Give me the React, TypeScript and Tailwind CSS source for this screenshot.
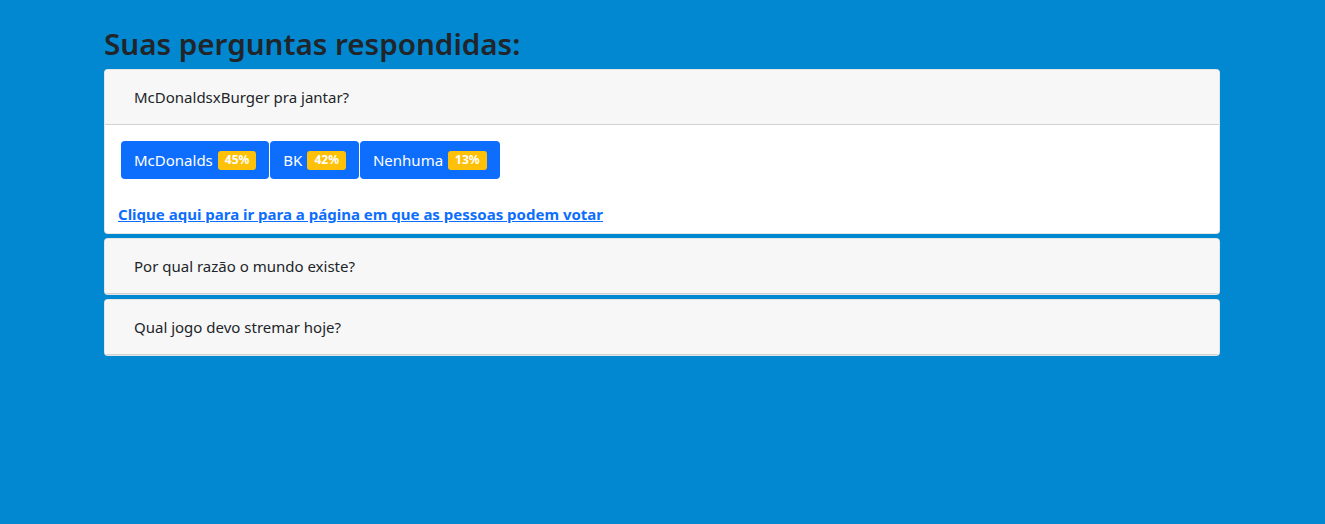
export default function App() {
  const options = [
    { name: "McDonalds", pct: "45%" },
    { name: "BK", pct: "42%" },
    { name: "Nenhuma", pct: "13%" },
  ];

  return (
    <div
      className="min-h-[524px] bg-[#0288d1] text-[#212529]"
      style={{ fontFamily: '"Noto Sans", "Open Sans", sans-serif' }}
    >
      <div className="ml-[92px] w-[1140px] px-3 pt-[22px]">
        <h2 className="mb-[3px] text-[29.6px] font-semibold leading-[44px]">
          Suas perguntas respondidas:
        </h2>

        <div className="flex flex-col gap-[4px]">
          {/* first card, open */}
          <div className="overflow-hidden rounded-[4px] border border-black/10 bg-white">
            <div className="flex h-[55px] items-center border-b border-black/15 bg-[#f7f7f7] px-[29px] text-[15px]">
              McDonaldsxBurger pra jantar?
            </div>
            <div className="px-[16px] pb-[9px] pt-[16px]">
              <div className="flex gap-px">
                {options.map((o) => (
                  <button
                    key={o.name}
                    className="flex h-[38px] items-center gap-[5px] rounded-[4px] bg-[#0d6efd] pl-[13px] pr-[13px] text-[15px] text-white"
                  >
                    {o.name}
                    <span className="flex h-[19px] items-center rounded-[3px] bg-[#ffc107] px-[7px] text-[12px] font-bold">
                      {o.pct}
                    </span>
                  </button>
                ))}
              </div>
              <a
                href="#"
                className="-ml-[3px] mt-[25px] block w-fit text-[15px] font-bold leading-[20px] text-[#0d6efd] underline"
              >
                Clique aqui para ir para a página em que as pessoas podem votar
              </a>
            </div>
          </div>

          {["Por qual razão o mundo existe?", "Qual jogo devo stremar hoje?"].map(
            (q) => (
              <div
                key={q}
                className="overflow-hidden rounded-[4px] border border-black/10 bg-white"
              >
                <div className="flex h-[55px] items-center border-b border-black/15 bg-[#f7f7f7] px-[29px] text-[15px]">
                  {q}
                </div>
              </div>
            )
          )}
        </div>
      </div>
    </div>
  );
}
